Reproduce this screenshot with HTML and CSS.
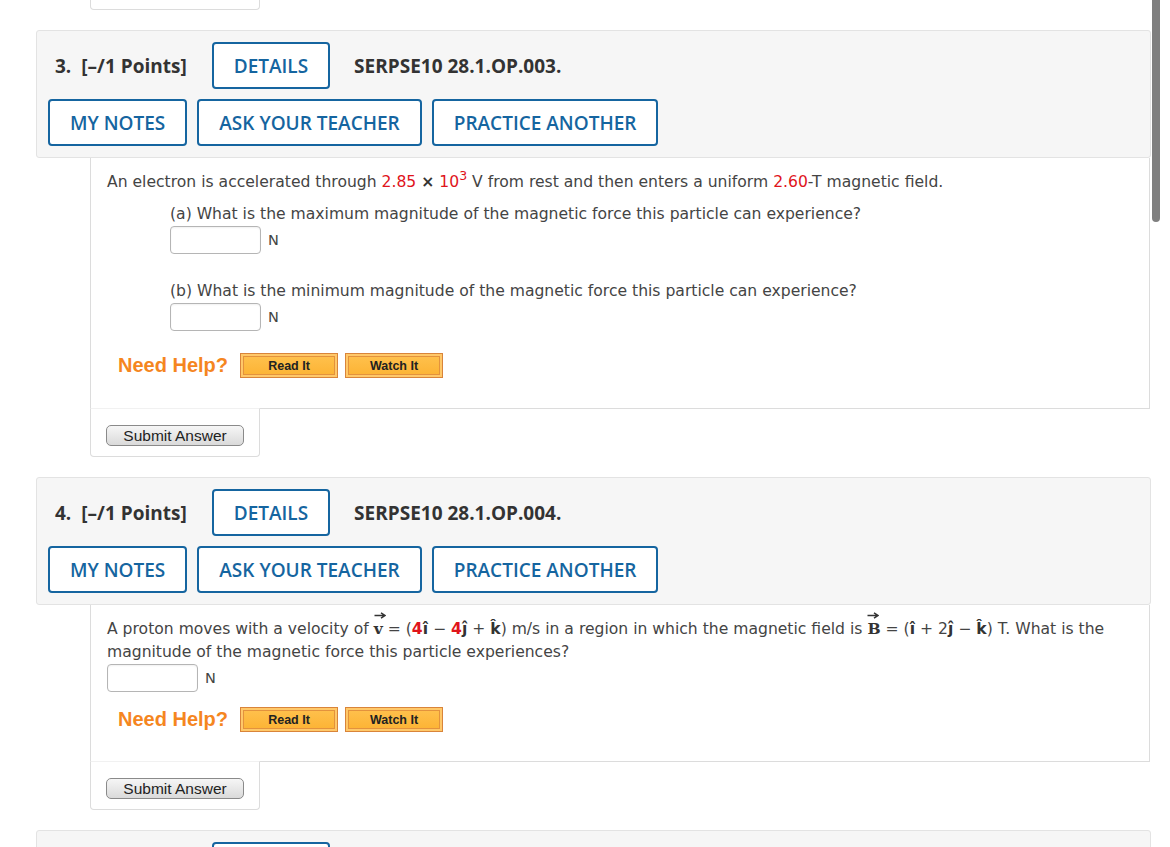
FILE: index.html
```html
<!DOCTYPE html>
<html lang="en">
<head>
<meta charset="utf-8">
<title>Questions</title>
<link rel="stylesheet" href="styles.css">
</head>
<body>
<div class="page">
  <div class="prev-tab"></div>

  <section class="question">
    <div class="qhead">
      <div class="row1">
        <span class="qnum">3.</span><span class="pts">[–/1 Points]</span>
        <span class="btn btn-details">DETAILS</span>
        <span class="code">SERPSE10 28.1.OP.003.</span>
      </div>
      <div class="row2">
        <span class="btn">MY NOTES</span>
        <span class="btn">ASK YOUR TEACHER</span>
        <span class="btn btn-last">PRACTICE ANOTHER</span>
      </div>
    </div>
    <div class="qbody q3body">
      <p class="stem">An electron is accelerated through <span class="red">2.85</span> <span class="times">×</span> <span class="red">10<sup>3</sup></span> V from rest and then enters a uniform <span class="red">2.60</span>-T magnetic field.</p>
      <div class="part part-a">
        <p class="stem">(a) What is the maximum magnitude of the magnetic force this particle can experience?</p>
        <div class="answer"><span class="input"></span><span class="unit">N</span></div>
      </div>
      <div class="part part-b">
        <p class="stem">(b) What is the minimum magnitude of the magnetic force this particle can experience?</p>
        <div class="answer"><span class="input"></span><span class="unit">N</span></div>
      </div>
      <div class="help help-q3">
        <span class="need">Need Help?</span>
        <span class="hbtn">Read It</span>
        <span class="hbtn">Watch It</span>
      </div>
    </div>
    <div class="submit-tab"><span class="submit">Submit Answer</span></div>
  </section>

  <section class="question">
    <div class="qhead">
      <div class="row1">
        <span class="qnum">4.</span><span class="pts">[–/1 Points]</span>
        <span class="btn btn-details">DETAILS</span>
        <span class="code">SERPSE10 28.1.OP.004.</span>
      </div>
      <div class="row2">
        <span class="btn">MY NOTES</span>
        <span class="btn">ASK YOUR TEACHER</span>
        <span class="btn btn-last">PRACTICE ANOTHER</span>
      </div>
    </div>
    <div class="qbody q4body">
      <p class="stem">A proton moves with a velocity of <span class="vec">v<svg class="arrow" viewBox="0 0 12 7" width="12" height="7"><path d="M0.5 3.5H10.5M7 0.8L11 3.5L7 6.2" fill="none" stroke="#333" stroke-width="1.4"/></svg></span> = (<span class="red b">4</span><b>î</b> − <span class="red b">4</span><b>ĵ</b> + <b>k&#770;</b>) m/s in a region in which the magnetic field is <span class="vec vecB">B<svg class="arrow" viewBox="0 0 12 7" width="12" height="7"><path d="M0.5 3.5H10.5M7 0.8L11 3.5L7 6.2" fill="none" stroke="#333" stroke-width="1.4"/></svg></span> = (<b>î</b> + 2<b>ĵ</b> − <b>k&#770;</b>) T. What is the magnitude of the magnetic force this particle experiences?</p>
      <div class="answer answer-q4"><span class="input"></span><span class="unit">N</span></div>
      <div class="help help-q4">
        <span class="need">Need Help?</span>
        <span class="hbtn">Read It</span>
        <span class="hbtn">Watch It</span>
      </div>
    </div>
    <div class="submit-tab"><span class="submit">Submit Answer</span></div>
  </section>

  <section class="question">
    <div class="qhead">
      <div class="row1">
        <span class="qnum">5.</span><span class="pts">[–/1 Points]</span>
        <span class="btn btn-details">DETAILS</span>
        <span class="code">SERPSE10 28.1.OP.005.</span>
      </div>
    </div>
  </section>
</div>
<div class="scrollbar"></div>
</body>
</html>
```
FILE: styles.css
```css
html, body {
  margin: 0;
  padding: 0;
  background: #fff;
}
body {
  height: 847px;
  overflow: hidden;
  font-family: "DejaVu Sans", Verdana, sans-serif;
  color: #444;
}
.page {
  margin-left: 36px;
  width: 1115px;
}
.prev-tab {
  margin-left: 54px;
  width: 170px;
  height: 10px;
  box-sizing: border-box;
  border: 1px solid #dcdcdc;
  border-top: none;
  border-radius: 0 0 4px 4px;
  margin-bottom: 20px;
}
.question {
  margin-bottom: 20px;
}
.qhead {
  background: #f6f6f6;
  border: 1px solid #e3e3e3;
  border-radius: 3px;
  padding: 11px;
  font-family: "Open Sans", sans-serif;
}
.row1 {
  display: flex;
  align-items: center;
  padding-left: 7px;
  height: 47px;
}
.row2 {
  display: flex;
  align-items: center;
  margin-top: 10px;
  height: 47px;
}
.qnum, .pts, .code {
  font-weight: 700;
  font-size: 19px;
  color: #333;
}
.qnum {
  margin-right: 10px;
}
.btn {
  display: inline-flex;
  align-items: center;
  box-sizing: border-box;
  height: 47px;
  padding: 0 20px;
  border: 2px solid #1565a0;
  border-radius: 4px;
  color: #1565a0;
  font-size: 19px;
  font-weight: 600;
  background: #fff;
  margin-right: 10px;
}
.btn-details {
  margin-left: 25px;
  margin-right: 24px;
}
.qbody {
  margin-left: 54px;
  width: 1060px;
  box-sizing: border-box;
  border: 1px solid #dcdcdc;
  border-top: none;
  background: #fff;
  padding: 13px 16px 0 16px;
}
.q3body {
  padding-bottom: 30px;
}
.q4body {
  padding-top: 12px;
  padding-bottom: 29px;
}
.stem {
  margin: 0;
  font-size: 15.6px;
  line-height: 23px;
}
.red {
  color: #e0141b;
}
.b {
  font-weight: 700;
}
b {
  font-weight: 700;
  color: #333;
}
.times {
  font-weight: 700;
  color: #333;
}
sup {
  font-size: 12.5px;
  line-height: 0;
  vertical-align: 7px;
}
.part {
  margin-left: 63px;
}
.part-a {
  margin-top: 9px;
}
.part-b {
  margin-top: 26px;
}
.answer {
  display: flex;
  align-items: center;
  margin-top: 0;
  height: 28px;
}
.answer-q4 {
  margin-top: 0;
}
.input {
  display: inline-block;
  box-sizing: border-box;
  width: 91px;
  height: 28px;
  border: 1px solid #b5b5b5;
  border-radius: 4px;
  background: #fff;
  box-shadow: inset 0 1px 2px rgba(0, 0, 0, 0.06);
}
.unit {
  margin-left: 7px;
  font-size: 14.5px;
  color: #444;
}
.help {
  display: flex;
  align-items: center;
  margin-left: 11px;
  height: 25px;
}
.help-q3 {
  margin-top: 22px;
}
.help-q4 {
  margin-top: 15px;
}
.need {
  font-family: "Liberation Sans", Arial, sans-serif;
  font-weight: 700;
  font-size: 20px;
  color: #f5861f;
  margin-right: 12px;
}
.hbtn {
  display: inline-flex;
  align-items: center;
  justify-content: center;
  box-sizing: border-box;
  width: 98px;
  height: 25px;
  margin-right: 7px;
  border: 1px solid #d9843a;
  background: linear-gradient(#ffc24f, #fcb232);
  box-shadow: inset 0 0 0 2px #ffc869, inset 0 0 0 3px #e3923d;
  font-family: "Liberation Sans", Arial, sans-serif;
  font-weight: 700;
  font-size: 12.5px;
  color: #222;
}
.submit-tab {
  margin-left: 54px;
  margin-top: -1px;
  width: 170px;
  height: 49px;
  box-sizing: border-box;
  border: 1px solid #dcdcdc;
  border-top: 1px solid #f1f1f1;
  border-radius: 0 0 4px 4px;
  background: #fff;
  padding: 16px 0 0 15px;
}
.submit {
  display: inline-flex;
  align-items: center;
  justify-content: center;
  box-sizing: border-box;
  width: 138px;
  height: 21px;
  border: 1px solid #8a8a8a;
  border-radius: 5px;
  background: linear-gradient(#f6f6f6, #dadada);
  font-family: "Liberation Sans", Arial, sans-serif;
  font-size: 15.5px;
  color: #222;
}
.vec {
  position: relative;
  display: inline-block;
  font-family: "DejaVu Serif", serif;
  font-weight: 700;
  color: #333;
}
.arrow {
  position: absolute;
  left: 0;
  top: -5px;
}
.scrollbar {
  position: absolute;
  left: 1152px;
  top: 0;
  width: 8px;
  height: 222px;
  border-radius: 0 0 4px 4px;
  background: #7f7f7f;
}
```
